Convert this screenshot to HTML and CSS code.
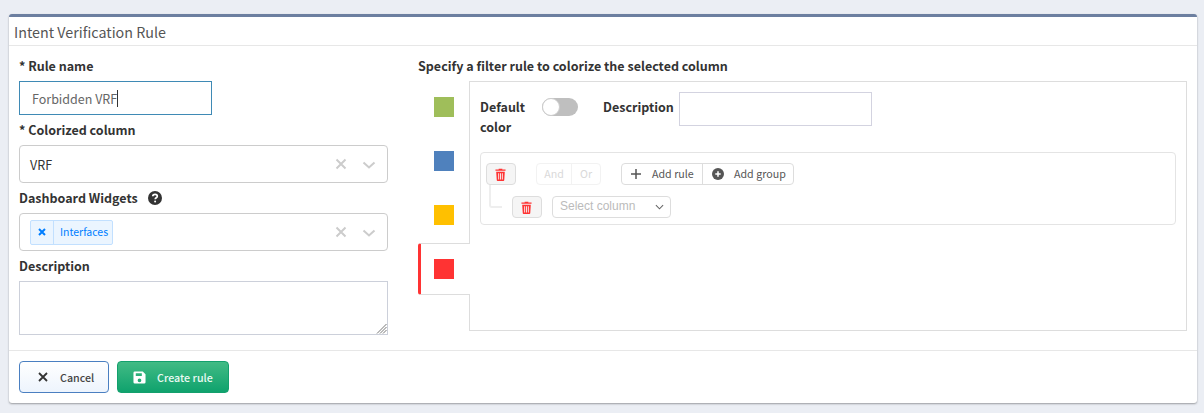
FILE: index.html
```html
<!DOCTYPE html>
<html lang="en">
<head>
<meta charset="utf-8">
<title>Intent Verification Rule</title>
<link rel="stylesheet" href="styles.css">
</head>
<body>
<main class="panel">
  <header class="panel-head">Intent Verification Rule</header>
  <div class="panel-body">
    <section class="left">
      <label class="label">* Rule name</label>
      <div class="text-input">Forbidden VRF<span class="caret"></span></div>
      <label class="label">* Colorized column</label>
      <div class="select">
        <span class="select-value">VRF</span>
        <svg class="sel-x" viewBox="0 0 12 12"><path d="M1.5 1.5l9 9M10.5 1.5l-9 9"/></svg>
        <svg class="sel-chev" viewBox="0 0 14 8"><path d="M1.5 1.5L7 6.5l5.5-5"/></svg>
      </div>
      <label class="label">Dashboard Widgets
        <svg class="help" viewBox="1 1 14 14"><circle cx="8" cy="8" r="7" fill="#333"/><path d="M5.8 6.3c0-1.3 1-2 2.3-2s2.2.8 2.2 1.9c0 1.600-2.100 1.500-2.100 3" fill="none" stroke="#fff" stroke-width="1.700"/><circle cx="8.100" cy="11.500" r="1" fill="#fff"/></svg>
      </label>
      <div class="select">
        <span class="tag"><span class="tag-x"><svg viewBox="0 0 8 8"><path d="M1 1l6 6M7 1L1 7"/></svg></span><span class="tag-text">Interfaces</span></span>
        <svg class="sel-x" viewBox="0 0 12 12"><path d="M1.5 1.5l9 9M10.5 1.5l-9 9"/></svg>
        <svg class="sel-chev" viewBox="0 0 14 8"><path d="M1.5 1.5L7 6.5l5.5-5"/></svg>
      </div>
      <label class="label">Description</label>
      <div class="textarea">
        <svg class="grip" viewBox="0 0 11 11"><path d="M10.500 1L1 10.500M10.500 4L4 10.500M10.500 7L7 10.500"/></svg>
      </div>
    </section>
    <section class="right">
      <h2 class="right-title">Specify a filter rule to colorize the selected column</h2>
      <div class="editor">
        <div class="tabs">
          <div class="tab"><span class="swatch swatch-green"></span></div>
          <div class="tab"><span class="swatch swatch-blue"></span></div>
          <div class="tab"><span class="swatch swatch-yellow"></span></div>
          <div class="tab tab-active"><span class="swatch swatch-red"></span></div>
        </div>
        <div class="content">
          <div class="meta">
            <span class="meta-label default-label">Default color</span>
            <span class="toggle"><span class="knob"></span></span>
            <span class="meta-label desc-label">Description</span>
            <div class="desc-input"></div>
          </div>
          <div class="builder">
            <div class="b-row">
              <button class="del"><svg viewBox="0 0 12 14"><path d="M4 1.500V.7h4v.8h3.500v1.500H.5V1.500z"/><path fill-rule="evenodd" d="M1.300 4h9.400l-.6 9a1 1 0 0 1-1 1H2.900a1 1 0 0 1-1-1zM3.500 5.500v7h1v-7zM5.500 5.500v7h1v-7zM7.500 5.500v7h1v-7z"/></svg></button>
              <div class="andor"><span class="andor-and">And</span><span class="andor-or">Or</span></div>
              <div class="adds">
                <span class="add add-rule"><svg class="plus" viewBox="0 0 10 10"><path d="M5 0v10M0 5h10"/></svg>Add rule</span>
                <span class="add add-group"><svg class="plus-c" viewBox="0 0 12 12"><circle cx="6" cy="6" r="6" fill="#555"/><path d="M6 3.300v5.400M3.300 6h5.400" stroke="#fff" stroke-width="1.500"/></svg>Add group</span>
              </div>
            </div>
            <div class="b-row b-row-child">
              <span class="connector"></span>
              <button class="del"><svg viewBox="0 0 12 14"><path d="M4 1.500V.7h4v.8h3.500v1.500H.5V1.500z"/><path fill-rule="evenodd" d="M1.300 4h9.400l-.6 9a1 1 0 0 1-1 1H2.900a1 1 0 0 1-1-1zM3.500 5.500v7h1v-7zM5.500 5.500v7h1v-7zM7.500 5.500v7h1v-7z"/></svg></button>
              <div class="col-select"><span>Select column</span><svg viewBox="0 0 10 6"><path d="M1 1l4 4 4-4"/></svg></div>
            </div>
          </div>
        </div>
      </div>
    </section>
  </div>
  <footer class="panel-foot">
    <button class="btn btn-cancel"><svg viewBox="0 0 10 10"><path d="M1 1l8 8M9 1L1 9"/></svg>Cancel</button>
    <button class="btn btn-create"><svg viewBox="0 0 14 14"><path fill-rule="evenodd" d="M2 .5h8.500L13.500 3.500V12a1.500 1.500 0 0 1-1.500 1.500H2A1.500 1.500 0 0 1 .5 12V2A1.500 1.500 0 0 1 2 .5zM3 2.500v3h6.500v-3zM7 8a2 2 0 1 0 0 4 2 2 0 0 0 0-4z"/></svg>Create rule</button>
  </footer>
</main>
</body>
</html>
```

FILE: styles.css
```css
* { box-sizing: border-box; }
html, body { margin: 0; height: 413px; overflow: hidden; }
body {
  background: #ebeef4;
  padding: 14px 7px 0 9px;
  font-family: "Noto Sans CJK SC", "Noto Sans", sans-serif;
  font-size: 12.5px;
  color: #333;
}
.panel {
  height: 389px;
  background: #fff;
  border-top: 3px solid #6c7fa0;
  border-radius: 3px;
  box-shadow: 0 1px 2px rgba(0,0,0,.35);
}
.panel-head {
  height: 29px;
  padding-left: 5px;
  font-size: 14.3px;
  line-height: 29px;
  color: #555;
  border-bottom: 1px solid #e7e7e7;
}
.panel-body { display: flex; height: 304px; padding: 10px 10px 0; gap: 30px; }
.left { width: 369px; flex: none; }
.right { flex: 1; min-width: 0; }
.label {
  display: flex;
  align-items: center;
  height: 20px;
  font-weight: 700;
  font-size: 12.5px;
  line-height: 20px;
  color: #333;
  white-space: nowrap;
}
.text-input {
  width: 193px;
  height: 34px;
  margin: 5px 0 5px;
  padding-left: 12px;
  border: 1px solid #3f8ab5;
  font-size: 12.5px;
  line-height: 33px;
  color: #666;
  display: flex;
  align-items: center;
}
.caret { width: 1px; height: 17px; background: #333; margin-left: 0; }
.select {
  height: 38px;
  margin: 5px 0;
  border: 1px solid #ccc;
  border-radius: 4px;
  display: flex;
  align-items: center;
  padding-left: 10px;
  position: relative;
}
.select-value { flex: 1; font-size: 12.5px; color: #333; }
.sel-x { width: 12px; height: 12px; position: absolute; right: 40px; top: 12px; }
.sel-x path { fill: none; stroke: #ccc; stroke-width: 2; }
.sel-chev { width: 14px; height: 8px; position: absolute; right: 11px; top: 15px; }
.sel-chev path { fill: none; stroke: #ccc; stroke-width: 2; }
.help { width: 14px; height: 14px; margin-left: 10px; }
.tag {
  display: flex;
  height: 25px;
  background: #ebf5ff;
  border: 1px solid #c2e0ff;
  border-radius: 2px;
  color: #007eff;
  font-size: 10.5px;
  line-height: 22px;
}
.tag-x { width: 23px; border-right: 1px solid #c2e0ff; display: flex; align-items: center; justify-content: center; }
.tag-x svg { width: 8px; height: 8px; }
.tag-x path { fill: none; stroke: #007eff; stroke-width: 2; }
.tag-text { padding: 0 4px 0 6px; }
.textarea {
  height: 54px;
  margin-top: 5px;
  border: 1px solid #ccd0da;
  position: relative;
}
.grip { position: absolute; right: 0; bottom: 0; width: 11px; height: 11px; }
.grip path { fill: none; stroke: #777; stroke-width: 1; }
.right-title { margin: 0 0 5px; height: 20px; font-size: 12.53px; line-height: 20px; font-weight: 700; color: #333; }
.editor { display: flex; height: 250px; }
.tabs { width: 52px; flex: none; padding-top: 1px; margin-right: -1px; position: relative; z-index: 1; }
.tab { height: 50px; margin-bottom: 4px; padding-left: 16px; display: flex; align-items: center; }
.tab-active {
  background: #fff;
  border: 1px solid #ddd;
  border-right: 0;
  border-left: 3px solid #ff3333;
  border-radius: 3px 0 0 3px;
  height: 52px;
  margin-top: 9px;
  padding-left: 13px;
}
.tabs .tab:nth-child(3) { margin-bottom: -6px; }
.swatch { width: 20px; height: 20px; display: block; }
.swatch-green { background: #9fbe5a; }
.swatch-blue { background: #4f81bd; }
.swatch-yellow { background: #ffc000; }
.swatch-red { background: #ff3333; }
.content { flex: 1; border: 1px solid #ddd; padding: 10px 10px 0; min-width: 0; }
.meta { display: flex; height: 60px; align-items: flex-start; }
.meta-label { font-weight: 700; font-size: 12.5px; line-height: 20px; color: #333; }
.default-label { width: 62px; margin-top: 5px; }
.toggle { width: 36px; height: 18px; margin-top: 6px; border-radius: 9px; background: #bfbfbf; position: relative; }
.knob { position: absolute; left: 0; top: 0; width: 18px; height: 18px; border-radius: 50%; background: #fff; border: 1px solid #ccc; }
.desc-label { margin-left: 25px; margin-top: 5px; width: 76px; white-space: nowrap; }
.desc-input { width: 193px; height: 34px; border: 1px solid #d3d3e0; }
.builder { width: 696px; height: 73px; border: 1px solid #e4e4e4; border-radius: 4px; padding: 10px 5px 0; }
.b-row { display: flex; height: 22px; align-items: stretch; }
.b-row-child { margin-top: 11px; padding-left: 26px; position: relative; }
.connector {
  position: absolute;
  left: 3px;
  top: -11px;
  width: 13px;
  height: 23px;
  border-left: 2px solid #eee;
  border-bottom: 2px solid #eee;
  border-radius: 0 0 0 3px;
}
.del {
  width: 30px;
  padding: 0 1px 0 0;
  background: #f5f5f5;
  border: 1px solid #ddd;
  border-radius: 4px;
  display: flex;
  align-items: center;
  justify-content: center;
}
.del svg { width: 11px; height: 13px; fill: #f33; }
.andor {
  display: flex;
  margin-left: 20px;
  width: 65px;
  border: 1px solid #f2f2f2;
  border-radius: 4px;
  font-size: 10.7px;
  line-height: 19px;
  color: #d9d9d9;
}
.andor-and { width: 35px; text-align: center; border-right: 1px solid #f2f2f2; }
.andor-or { flex: 1; text-align: center; }
.adds {
  display: flex;
  margin-left: 20px;
  width: 173px;
  border: 1px solid #ddd;
  border-radius: 4px;
  font-size: 10.7px;
  line-height: 20px;
  color: #555;
}
.add { display: flex; align-items: center; white-space: nowrap; }
.add-rule { width: 81px; padding-left: 9px; border-right: 1px solid #ddd; }
.add-group { padding-left: 9px; }
.plus { width: 10px; height: 10px; margin-right: 11px; }
.plus path { stroke: #555; stroke-width: 1.500; fill: none; }
.plus-c { width: 12px; height: 12px; margin-right: 10px; }
.col-select {
  margin-left: 10px;
  width: 119px;
  border: 1px solid #ddd;
  border-radius: 4px;
  padding-left: 7px;
  display: flex;
  align-items: center;
  justify-content: space-between;
  font-family: "Liberation Sans", sans-serif;
  font-size: 12px;
  color: #bbb;
}
.col-select span { position: relative; top: -1px; }
.col-select svg { width: 9px; height: 6px; margin-right: 6px; }
.col-select path { fill: none; stroke: #666; stroke-width: 1.200; }
.panel-foot { height: 54px; border-top: 1px solid #e7e7e7; padding: 10px 10px 0; display: flex; gap: 8px; align-items: flex-start; }
.btn {
  height: 32px;
  border-radius: 4px;
  font-family: inherit;
  font-size: 10.7px;
  font-weight: 500;
  display: flex;
  align-items: center;
  padding: 0;
}
.btn-cancel {
  width: 90px;
  padding-left: 18px;
  background: linear-gradient(#fff, #edf4fd);
  border: 1px solid #4a7fc1;
  color: #444;
}
.btn-cancel svg { width: 10px; height: 10px; margin-right: 12px; }
.btn-cancel path { stroke: #333; stroke-width: 1.800; fill: none; }
.btn-create {
  width: 112px;
  padding-left: 15px;
  background: linear-gradient(#42bb85, #0fa26d);
  border: 1px solid #13a06d;
  color: #eafaf3;
}
.btn-create svg { width: 13px; height: 13px; margin-right: 11px; fill: #fff; }
```
